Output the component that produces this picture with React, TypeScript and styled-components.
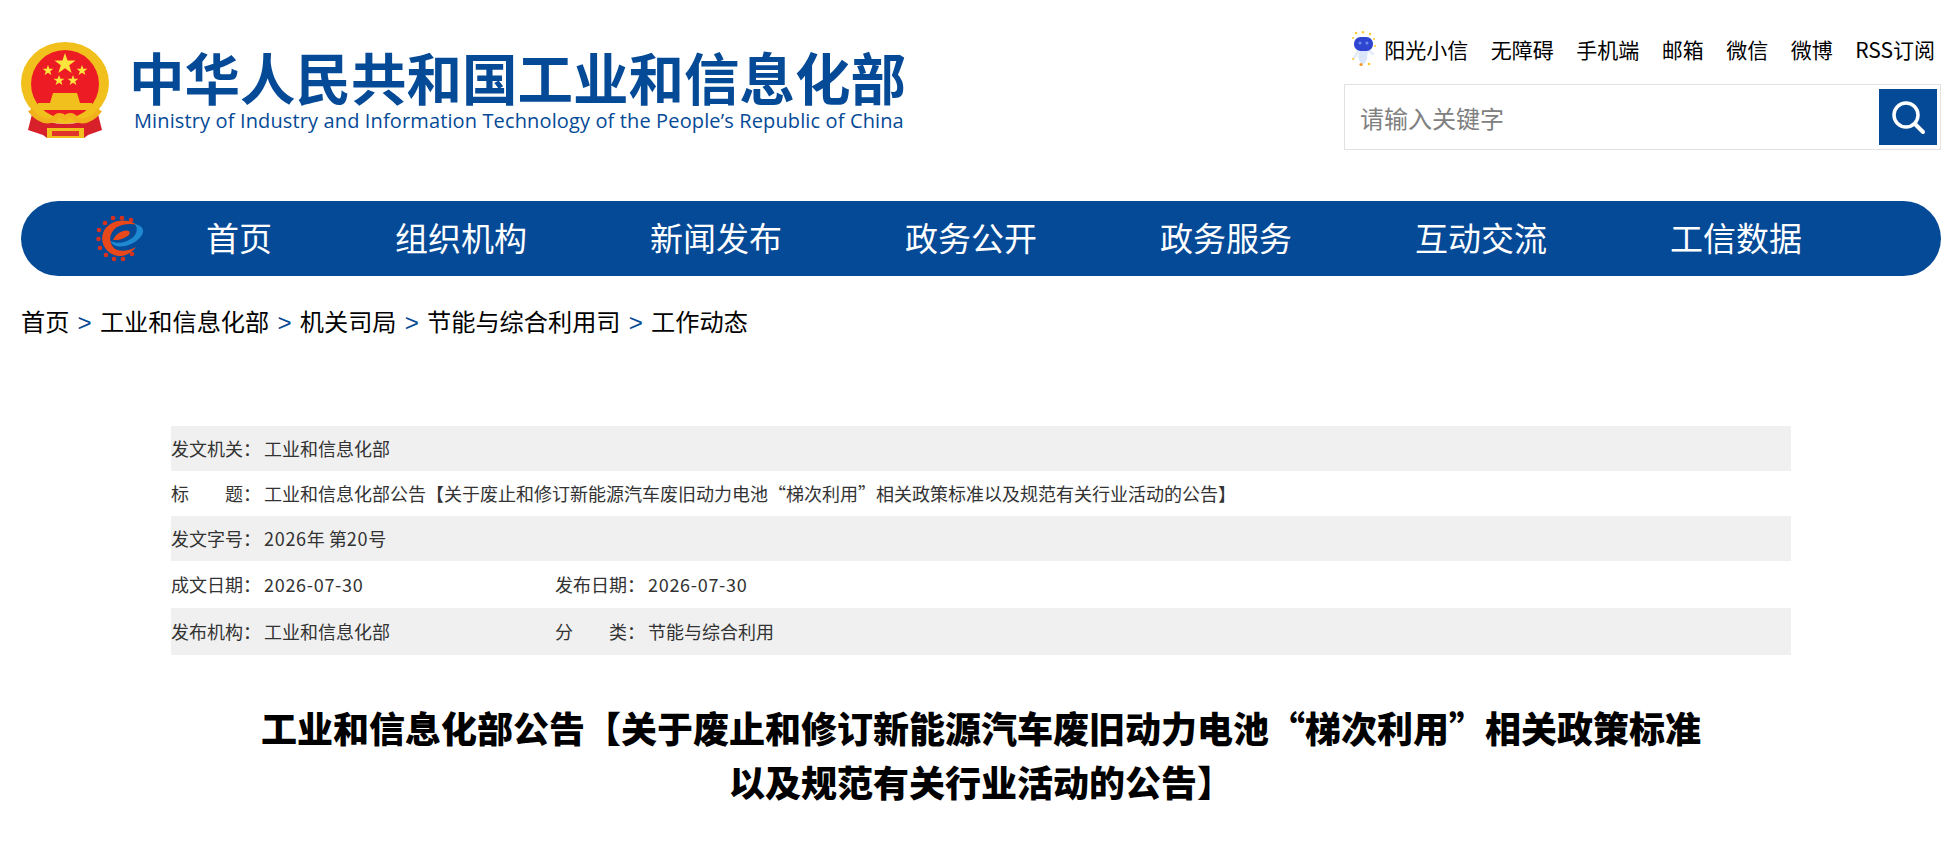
import styled, { createGlobalStyle } from 'styled-components';

const BLUE = '#054a97';

const GlobalStyle = createGlobalStyle`
  html, body {
    margin: 0;
    padding: 0;
    background: #fff;
    font-family: 'Noto Sans CJK SC', 'Liberation Sans', sans-serif;
  }
`;

const Page = styled.div`
  width: 1959px;
  height: 842px;
  overflow: hidden;
  padding: 0 18px 0 21px;
  box-sizing: border-box;
`;

const Header = styled.header`
  display: flex;
  justify-content: space-between;
  height: 201px;
`;

const Brand = styled.div`
  display: flex;
  gap: 19px;
  padding-top: 42px;
`;

const BrandText = styled.div`
  display: flex;
  flex-direction: column;
  padding-top: 2px;
  color: ${BLUE};
`;

const BrandName = styled.div`
  font-size: 55.5px;
  font-weight: 700;
  line-height: 64px;
  height: 64px;
  white-space: nowrap;
`;

const BrandEnglish = styled.div`
  font-family: 'Open Sans', sans-serif;
  font-size: 20px;
  line-height: 26px;
  margin-left: 5px;
  white-space: nowrap;
  letter-spacing: 0.13px;
`;

const Tools = styled.div`
  width: 597px;
  display: flex;
  flex-direction: column;
  padding-top: 29px;
`;

const ToolLinks = styled.nav`
  display: flex;
  justify-content: flex-end;
  align-items: center;
  height: 40px;
  gap: 22.5px;
  padding-right: 6px;
  font-size: 21px;
  color: #000;
`;

const RobotLink = styled.span`
  display: flex;
  align-items: center;
  gap: 8px;
`;

const SearchBox = styled.div`
  display: flex;
  align-items: center;
  justify-content: space-between;
  height: 66px;
  margin-top: 15px;
  box-sizing: border-box;
  border: 1px solid #e2e2e2;
  padding: 4px 3px 4px 15px;
  color: #808080;
  font-size: 24px;
`;

const SearchButton = styled.div`
  width: 58px;
  height: 56px;
  background: ${BLUE};
  display: flex;
  align-items: center;
  justify-content: center;
`;

const NavBar = styled.nav`
  display: flex;
  align-items: center;
  height: 75px;
  border-radius: 38px;
  background: ${BLUE};
  padding-left: 75px;
  color: #fff;
  font-size: 33px;
`;

const NavItems = styled.div`
  display: flex;
  gap: 123px;
  margin-left: 61px;
  padding-bottom: 4px;
`;

const Crumbs = styled.div`
  display: flex;
  align-items: center;
  height: 44px;
  margin-top: 22px;
  font-size: 24.2px;
  color: #000;
`;

const CrumbArrow = styled.span`
  color: ${BLUE};
  margin: 0 8.2px;
  font-family: 'Liberation Sans', sans-serif;
`;

const InfoTable = styled.div`
  margin: 84px 0 0 150px;
  width: 1620px;
  font-size: 18px;
  color: #333;
`;

const InfoRow = styled.div<{ $shaded?: boolean; $h?: number }>`
  display: flex;
  align-items: center;
  height: ${({ $h }) => $h ?? 45}px;
  background: ${({ $shaded }) => ($shaded ? '#f0f0f0' : 'transparent')};
`;

const InfoCell = styled.div`
  display: flex;
  align-items: baseline;
  width: 384px;
  flex-shrink: 0;
  padding-bottom: 2px;
  white-space: nowrap;
`;

const InfoLabel = styled.span`
  width: 90px;
  margin-right: 3px;
  flex-shrink: 0;
  display: flex;
  justify-content: space-between;
`;

const Digits = styled.span`
  letter-spacing: 0.7px;
`;

const Title = styled.h1`
  margin: 45px 0 0 230px;
  width: 1460px;
  text-align: center;
  font-size: 36px;
  font-weight: 900;
  line-height: 54px;
  color: #000;
`;

function Emblem() {
  return (
    <svg width="89" height="97" viewBox="0 0 89 97">
      <ellipse cx="44" cy="41" rx="44" ry="41" fill="#f2c01c" />
      <circle cx="44" cy="42" r="34" fill="#ed1c24" />
      <path d="M11 72 L7 88 L22 93 L26 96 H63 L67 93 L81 88 L77 72 Q44 92 11 72Z" fill="#d8202a" />
      <path d="M44 11l2.600 7.500h8l-6.400 4.800 2.400 7.700-6.600-4.700-6.600 4.700 2.400-7.700-6.400-4.800h8z" fill="#fbe43c" />
      <path d="M27 23l1.400 3.700h4l-3.200 2.500 1.200 3.800-3.400-2.300-3.400 2.300 1.200-3.800-3.200-2.500h4zM61 23l1.400 3.700h4l-3.200 2.500 1.200 3.800-3.400-2.300-3.400 2.300 1.200-3.800-3.200-2.500h4zM38 33l1.400 3.700h4l-3.200 2.500 1.200 3.800-3.400-2.300-3.400 2.300 1.200-3.800-3.200-2.500h4zM52 33l1.400 3.700h4l-3.200 2.500 1.200 3.800-3.400-2.300-3.400 2.300 1.200-3.800-3.200-2.500h4z" fill="#fbe43c" />
      <path d="M32 51h24l3 10h12v7H17v-7h12z" fill="#f2c01c" />
      <path d="M9 68 Q20 82 32 78 Q38 70 44 76 Q50 70 56 78 Q68 82 79 68" fill="none" stroke="#f2b21c" strokeWidth="5" />
      <path d="M26 86h37v10H26z" fill="#f2c01c" />
      <path d="M31 89h27v5H31z" fill="#e0342a" />
    </svg>
  );
}

function Robot() {
  return (
    <svg width="25" height="36" viewBox="0 0 25 36">
      <path d="M9 19 H17 L16 28 Q14 33 11 34 Q8 30 7 26Z" fill="#dbe6f8" />
      <path d="M7 21 L3 27 M18 20 L22 23" stroke="#e3ebf8" strokeWidth="2.500" strokeLinecap="round" />
      <rect x="3" y="6" width="19" height="14" rx="6.500" fill="#2f45d0" />
      <circle cx="9" cy="12" r="1.500" fill="#6d8df0" />
      <circle cx="16" cy="12" r="1.500" fill="#6d8df0" />
      <g fill="#fbc92a">
        <circle cx="5" cy="2" r="1.200" /><circle cx="12" cy="1.200" r="1.200" /><circle cx="19" cy="3" r="1.200" />
        <circle cx="2" cy="7" r="1" /><circle cx="23" cy="8" r="1" /><circle cx="24" cy="15" r="1" />
        <circle cx="2" cy="28" r="1" /><circle cx="18" cy="33" r="1.300" />
      </g>
      <circle cx="10" cy="33.500" r="1.600" fill="#f39a1e" />
    </svg>
  );
}

function SearchGlyph() {
  return (
    <svg width="36" height="36" viewBox="0 0 36 36" fill="none" stroke="#fff" strokeLinecap="round">
      <circle cx="16" cy="16" r="12" strokeWidth="3.500" />
      <path d="M25 25 L33 33" strokeWidth="4" />
    </svg>
  );
}

function NavLogo() {
  return (
    <svg width="49" height="47" viewBox="0 0 49 47">
      <g fill="#d8321e">
        <circle cx="17" cy="3" r="2.300" /><circle cx="26" cy="3" r="2.300" /><circle cx="35" cy="5" r="2.300" />
        <circle cx="9" cy="8" r="2.300" /><circle cx="3" cy="15" r="2.300" /><circle cx="2.500" cy="24" r="2.300" />
        <circle cx="4" cy="33" r="2.300" /><circle cx="10" cy="40" r="2.300" /><circle cx="18" cy="44" r="2.300" />
        <circle cx="27" cy="44" r="2.300" /><circle cx="36" cy="39" r="2.300" />
      </g>
      <path d="M41 10 C30 2 12 5 7 18 C3 31 14 42 26 41 C32 40 37 36 40 32 C33 36 22 38 17 32 C12 25 14 17 21 12 C27 9 35 8 41 10Z" fill="#e8481a" />
      <path d="M38 9 C46 10 49 15 46 20 C40 29 28 33 20 31 C17 30 15 28 15 26 C22 30 34 27 39 20 C42 15 41 11 38 9Z" fill="#1e88d0" />
      <path d="M17 25 C20 18 28 14 33 16 C36 19 30 23 22 25Z" fill="#e8481a" />
    </svg>
  );
}

const tools = ['无障碍', '手机端', '邮箱', '微信', '微博', 'RSS订阅'];
const navItems = ['首页', '组织机构', '新闻发布', '政务公开', '政务服务', '互动交流', '工信数据'];
const crumbs = ['首页', '工业和信息化部', '机关司局', '节能与综合利用司', '工作动态'];

function Label({ parts }: { parts: string[] }) {
  return (
    <InfoLabel>
      {parts.map((p, i) => (
        <span key={i}>{p}</span>
      ))}
    </InfoLabel>
  );
}

export default function App() {
  return (
    <Page>
      <GlobalStyle />
      <Header>
        <Brand>
          <Emblem />
          <BrandText>
            <BrandName>中华人民共和国工业和信息化部</BrandName>
            <BrandEnglish>Ministry of Industry and Information Technology of the People’s Republic of China</BrandEnglish>
          </BrandText>
        </Brand>
        <Tools>
          <ToolLinks>
            <RobotLink>
              <Robot />
              阳光小信
            </RobotLink>
            {tools.map((t) => (
              <span key={t}>{t}</span>
            ))}
          </ToolLinks>
          <SearchBox>
            请输入关键字
            <SearchButton>
              <SearchGlyph />
            </SearchButton>
          </SearchBox>
        </Tools>
      </Header>
      <NavBar>
        <NavLogo />
        <NavItems>
          {navItems.map((n) => (
            <span key={n}>{n}</span>
          ))}
        </NavItems>
      </NavBar>
      <Crumbs>
        {crumbs.map((c, i) => (
          <span key={c}>
            {i > 0 && <CrumbArrow>&gt;</CrumbArrow>}
            {c}
          </span>
        ))}
      </Crumbs>
      <InfoTable>
        <InfoRow $shaded>
          <InfoCell>
            <Label parts={['发文机关：']} />
            工业和信息化部
          </InfoCell>
        </InfoRow>
        <InfoRow>
          <InfoCell>
            <Label parts={['标', '题：']} />
            工业和信息化部公告【关于废止和修订新能源汽车废旧动力电池“梯次利用”相关政策标准以及规范有关行业活动的公告】
          </InfoCell>
        </InfoRow>
        <InfoRow $shaded>
          <InfoCell>
            <Label parts={['发文字号：']} />
            <span>
              <Digits>2026</Digits>年 第<Digits>20</Digits>号
            </span>
          </InfoCell>
        </InfoRow>
        <InfoRow $h={47}>
          <InfoCell>
            <Label parts={['成文日期：']} />
            <Digits>2026-07-30</Digits>
          </InfoCell>
          <InfoCell>
            <Label parts={['发布日期：']} />
            <Digits>2026-07-30</Digits>
          </InfoCell>
        </InfoRow>
        <InfoRow $shaded $h={47}>
          <InfoCell>
            <Label parts={['发布机构：']} />
            工业和信息化部
          </InfoCell>
          <InfoCell>
            <Label parts={['分', '类：']} />
            节能与综合利用
          </InfoCell>
        </InfoRow>
      </InfoTable>
      <Title>
        工业和信息化部公告【关于废止和修订新能源汽车废旧动力电池“梯次利用”相关政策标准以及规范有关行业活动的公告】
      </Title>
    </Page>
  );
}
